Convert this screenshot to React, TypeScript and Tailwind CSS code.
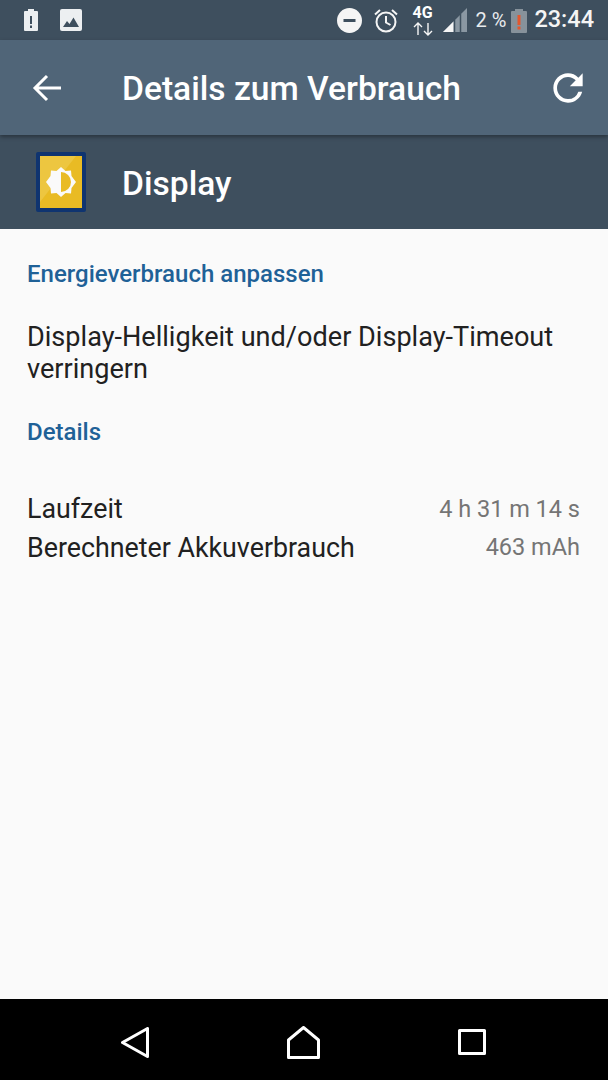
import React from "react";

const font = { fontFamily: "Roboto, sans-serif" };

function Status() {
  return (
    <div className="h-[40px] bg-[#3e4f5e] flex items-center pl-[23px] pr-[14px] text-white shrink-0">
      <svg width="16" height="24" viewBox="0 0 16 24">
        <path d="M5 1h6v2h3a1 1 0 0 1 1 1v18a1 1 0 0 1-1 1H2a1 1 0 0 1-1-1V4a1 1 0 0 1 1-1h3z" fill="#eceff1" />
        <rect x="7" y="8" width="2" height="8" fill="#3e4f5e" />
        <rect x="7" y="17.5" width="2" height="2.5" fill="#3e4f5e" />
      </svg>
      <svg width="22" height="22" viewBox="0 0 22 22" className="ml-[21px]">
        <rect x="0" y="0" width="22" height="22" rx="2" fill="#eceff1" />
        <path d="M3 18l4-6 2.5 3 4-6.500L19 18z" fill="#3e4f5e" />
      </svg>
      <div className="flex-1" />
      <svg width="25" height="25" viewBox="0 0 25 25">
        <circle cx="12.5" cy="12.5" r="12.5" fill="#f5f5f5" />
        <rect x="6.500" y="11" width="12" height="3" fill="#3e4f5e" />
      </svg>
      <svg width="24" height="25" viewBox="0 0 24 25" className="ml-[12px]" fill="none" stroke="#f5f5f5" strokeWidth="2">
        <circle cx="12" cy="14" r="9.500" />
        <path d="M12 8v6.500l4.500 2.500M1 6.500l5-4.500M23 6.500L18 2" />
      </svg>
      <div className="ml-[14px] w-[22px] flex flex-col items-center leading-none mt-[2px]">
        <span className="text-[16px] font-bold leading-[16px]">4G</span>
        <svg width="22" height="16" viewBox="0 0 22 16" fill="none" stroke="#f5f5f5" strokeWidth="1.400">
          <path d="M6 14V2M2 6l4-4 4 4M16 2v12M12 10l4 4 4-4" />
        </svg>
      </div>
      <svg width="24" height="24" viewBox="0 0 24 24" className="ml-[9px]">
        <path d="M24 0v24H0z" fill="#8a97a2" />
        <path d="M10.500 13.500V24H0z" fill="#f5f5f5" />
        <path d="M11.500 24V12M17.500 24V6" stroke="#3e4f5e" strokeWidth="1.500" />
      </svg>
      <span className="ml-[9px] text-[20px] leading-none text-[#e8ebed] whitespace-nowrap">2 %</span>
      <svg width="16" height="25" viewBox="0 0 16 25" className="ml-[5px]">
        <path d="M4 1h8v2h3a1 1 0 0 1 1 1v20a1 1 0 0 1-1 1H1a1 1 0 0 1-1-1V4a1 1 0 0 1 1-1h3z" fill="#87929b" />
        <rect x="6.500" y="7" width="3" height="10" fill="#e4572e" />
        <rect x="6.500" y="18.500" width="3" height="3" fill="#e4572e" />
      </svg>
      <span className="ml-[7px] text-[23.500px] leading-none font-medium text-[#f5f5f5]">23:44</span>
    </div>
  );
}

function Toolbar() {
  return (
    <div className="h-[95px] bg-[#506578] flex items-center pl-[32px] pr-[18px] text-white shrink-0 relative z-10 shadow-[0_2px_4px_rgba(0,0,0,0.35)]">
      <svg width="30" height="30" viewBox="0 0 30 30" fill="none" stroke="white" strokeWidth="3">
        <path d="M29 15H4M15 3L3 15l12 12" />
      </svg>
      <span className="ml-[60px] mt-[4px] text-[33.600px] font-medium flex-1 whitespace-nowrap">Details zum Verbrauch</span>
      <svg width="44" height="44" viewBox="0 0 24 24" fill="white">
        <path d="M17.65 6.35A7.958 7.958 0 0 0 12 4c-4.420 0-7.990 3.580-7.990 8s3.570 8 7.990 8c3.730 0 6.840-2.550 7.730-6h-2.080A5.990 5.990 0 0 1 12 18c-3.310 0-6-2.690-6-6s2.690-6 6-6c1.660 0 3.140.690 4.220 1.780L13 11h7V4l-2.350 2.350z" />
      </svg>
    </div>
  );
}

function Header() {
  return (
    <div className="h-[94px] bg-[#3e4f5e] flex items-center pl-[36px] text-white shrink-0">
      <svg width="50" height="60" viewBox="0 0 50 60">
        <rect x="0" y="0" width="50" height="60" rx="2" fill="#0f3470" />
        <rect x="4" y="4" width="42" height="52" fill="#e9bb24" />
        <path d="M4 4h36L4 50z" fill="#edc640" />
        <path d="M25 15l4.500 4 5.500-.5.500 5.500 4.500 6-4.500 6-.5 5.500-5.500-.5-4.500 4-4.500-4-5.500.5-.5-5.500-4.500-6 4.500-6 .5-5.500 5.500.5z" fill="#fafafa" />
        <path d="M25 20a10 10 0 0 1 0 20z" fill="#e9bb24" />
      </svg>
      <span className="ml-[36px] mt-[4px] text-[33.600px] font-medium">Display</span>
    </div>
  );
}

export default function App() {
  return (
    <div style={font} className="w-[608px] h-[1080px] flex flex-col bg-[#fafafa] overflow-hidden">
      <Status />
      <Toolbar />
      <Header />
      <div className="flex-1 px-[28px]">
        <div className="mt-[31px] -ml-[1px] text-[24px] leading-[28px] font-medium text-[#1f6197]">Energieverbrauch anpassen</div>
        <div className="mt-[33px] -ml-[1px] text-[27.100px] leading-[32px] text-[#212121]">Display-Helligkeit und/oder Display-Timeout verringern</div>
        <div className="mt-[33px] -ml-[1px] text-[24px] leading-[28px] font-medium text-[#1f6197]">Details</div>
        <div className="mt-[44px] -ml-[1px] flex justify-between items-center h-[39px]">
          <span className="text-[26.800px] text-[#212121]">Laufzeit</span>
          <span className="text-[23.500px] text-[#757575]">4 h 31 m 14 s</span>
        </div>
        <div className="flex -ml-[1px] justify-between items-center h-[38px]">
          <span className="text-[26.800px] text-[#212121]">Berechneter Akkuverbrauch</span>
          <span className="text-[23.500px] text-[#757575]">463 mAh</span>
        </div>
      </div>
      <div className="h-[81px] bg-black flex items-center gap-[138px] pl-[121px] pt-[5px] shrink-0">
        <svg width="28" height="31" viewBox="0 0 28 31" fill="none" stroke="white" strokeWidth="3" strokeLinejoin="round">
          <path d="M26.500 1.500v28L1.500 15.500z" />
        </svg>
        <svg width="33" height="33" viewBox="0 0 33 33" fill="none" stroke="white" strokeWidth="3" strokeLinejoin="round">
          <path d="M1.500 14L16.500 1.500 31.500 14v17.500h-30z" />
        </svg>
        <svg width="28" height="26" viewBox="0 0 28 26" fill="none" stroke="white" strokeWidth="3" strokeLinejoin="round">
          <rect x="1.500" y="1.500" width="25" height="23" />
        </svg>
      </div>
    </div>
  );
}
